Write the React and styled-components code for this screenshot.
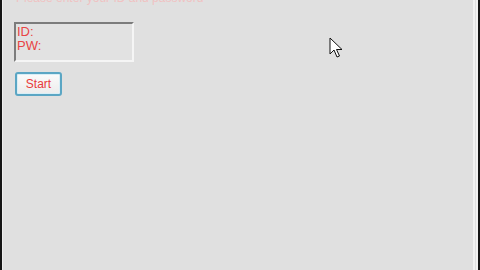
import React from "react";
import styled, { createGlobalStyle } from "styled-components";

const Global = createGlobalStyle`
  html, body { margin: 0; padding: 0; background: #e0e0e0; }
  #root { width: 480px; height: 270px; overflow: hidden; }
`;

const Window = styled.div`
  position: relative;
  width: 480px;
  height: 270px;
  box-sizing: border-box;
  background: #e0e0e0;
  border-left: 2px solid #161616;
  border-right: 2px solid #161616;
  overflow: hidden;
`;

const Panel = styled.div`
  height: 100%;
  box-sizing: border-box;
  border-left: 1px solid #eeeeee;
  border-right: 5px double #f2f2f2;
  display: flex;
  flex-direction: column;
  align-items: flex-start;
  padding-left: 11px;
  font-family: "Liberation Sans", Arial, sans-serif;
`;

const Caption = styled.div`
  margin-top: -8px;
  height: 12px;
  font-size: 12px;
  line-height: 12px;
  color: #f0c2c2;
  padding-left: 2px;
  white-space: nowrap;
`;

const Field = styled.div`
  margin-top: 18px;
  width: 120px;
  height: 40px;
  box-sizing: border-box;
  border-top: 2px solid #7c7c7c;
  border-left: 2px solid #7c7c7c;
  border-right: 2px solid #f5f5f5;
  border-bottom: 2px solid #f5f5f5;
  background: #e2e2e2;
  padding: 1px 0 0 1px;
  display: flex;
  flex-direction: column;
`;

const FieldLine = styled.div`
  font-size: 13px;
  line-height: 14px;
  color: #e84444;
`;

const StartButton = styled.button`
  margin-top: 10px;
  margin-left: 1px;
  width: 47px;
  height: 24px;
  box-sizing: border-box;
  border: 2px solid #5ba6c4;
  border-radius: 3px;
  background: linear-gradient(#fbfbfb, #ececec);
  box-shadow: inset 0 0 0 1px #d8eef6;
  font-family: "Liberation Sans", Arial, sans-serif;
  font-size: 12px;
  color: #e83a3a;
  padding: 0;
`;

const Cursor = styled.svg`
  position: absolute;
  left: 327px;
  top: 37px;
`;

export default function App() {
  return (
    <>
      <Global />
      <Window>
        <Panel>
          <Caption>Please enter your ID and password</Caption>
          <Field>
            <FieldLine>ID:</FieldLine>
            <FieldLine>PW:</FieldLine>
          </Field>
          <StartButton>Start</StartButton>
        </Panel>
        <Cursor width="14" height="22" viewBox="0 0 14 22">
          <path
            d="M1 1 L1 17 L5 13 L8 20 L10.5 19 L7.5 12.5 L13 12.5 Z"
            fill="#ffffff"
            stroke="#111111"
            strokeWidth="1"
            strokeLinejoin="miter"
          />
        </Cursor>
      </Window>
    </>
  );
}
